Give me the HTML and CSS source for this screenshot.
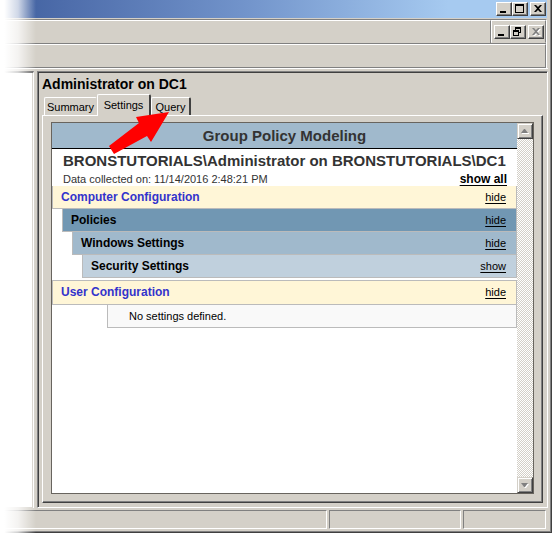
FILE: index.html
```html
<!DOCTYPE html>
<html lang="en">
<head>
<meta charset="utf-8">
<title>Group Policy Modeling</title>
<link rel="stylesheet" href="styles.css">
</head>
<body>
<div class="window">
  <header class="titlebar">
    <div class="controls">
      <button class="control" aria-label="Minimize"><svg viewBox="0 0 12 10"><path d="M2 7h6v2H2z"/></svg></button>
      <button class="control" aria-label="Maximize"><svg viewBox="0 0 12 10"><path fill-rule="evenodd" d="M1 0h9v9H1zM2 2v6h7V2z"/></svg></button>
      <button class="control control-close" aria-label="Close"><svg viewBox="0 0 12 10"><path d="M2 1h2l2 2 2-2h2L7 4.500 10 8H8L6 6 4 8H2l3-3.500z"/></svg></button>
    </div>
  </header>
  <div class="bars">
    <div class="menubar">
      <div class="menu-space"></div>
      <div class="controls child-controls">
        <button class="control" aria-label="Minimize child window"><svg viewBox="0 0 12 10"><path d="M2 7h6v2H2z"/></svg></button>
        <button class="control" aria-label="Restore child window"><svg viewBox="0 0 12 10"><path fill-rule="evenodd" d="M3 0h6v6H7v3H1V3h2zM4 2v1h3v2h1V2zM2 5v3h4V5z"/></svg></button>
        <button class="control control-close" aria-label="Close child window" disabled><svg viewBox="0 0 12 10"><path class="shine" d="M3 2h2l2 2 2-2h2L8 5.500 11 9H9L7 7 5 9H3l3-3.500z"/><path class="dim" d="M2 1h2l2 2 2-2h2L7 4.500 10 8H8L6 6 4 8H2l3-3.500z"/></svg></button>
      </div>
    </div>
    <div class="toolbar"></div>
  </div>
  <div class="workspace">
    <aside class="tree"></aside>
    <main class="details">
      <h1>Administrator on DC1</h1>
      <div class="tabs" role="tablist">
        <button class="tab" role="tab">Summary</button>
        <button class="tab active" role="tab" aria-selected="true">Settings</button>
        <button class="tab query" role="tab">Query</button>
        <svg class="arrow" viewBox="0 0 60 44" aria-hidden="true"><path d="M60 1 27 6l3 6L0 35l5 8 33-18 4 6z"/></svg>
      </div>
      <section class="tab-page">
        <div class="browser">
          <div class="report">
            <h2>Group Policy Modeling</h2>
            <div class="summary">
              <h3>BRONSTUTORIALS\Administrator on BRONSTUTORIALS\DC1</h3>
              <div class="collected"><span>Data collected on: 11/14/2016 2:48:21 PM</span><a href="#all">show all</a></div>
            </div>
            <div class="row root"><span>Computer Configuration</span><a href="#computer">hide</a></div>
            <div class="row policies"><span>Policies</span><a href="#policies">hide</a></div>
            <div class="row windows"><span>Windows Settings</span><a href="#windows">hide</a></div>
            <div class="row security"><span>Security Settings</span><a href="#security">show</a></div>
            <div class="row root user"><span>User Configuration</span><a href="#user">hide</a></div>
            <div class="row empty"><span>No settings defined.</span></div>
          </div>
          <div class="scrollbar">
            <button class="scroll" aria-label="Scroll up"><svg viewBox="0 0 8 4"><path class="shine" d="M1 4h7v1H1z"/><path class="dim" d="M0 4 3 0h1l3 4z"/></svg></button>
            <button class="scroll" aria-label="Scroll down"><svg viewBox="0 0 8 4"><path class="shine" d="M1 1h7L5 5H4z"/><path class="dim" d="M0 0h7L4 4H3z"/></svg></button>
          </div>
        </div>
      </section>
    </main>
  </div>
  <footer class="status"><div></div><div></div><div></div></footer>
  <div class="fade"></div>
</div>
</body>
</html>
```
FILE: styles.css
```css
* { box-sizing: border-box; }
body {
  margin: 0;
  font: 12px/14px "Liberation Sans", Arial, sans-serif;
  color: #000;
}
h1, h2, h3 { margin: 0; font-weight: bold; }
button { font: inherit; padding: 0; border: 0; border-radius: 0; color: #000; background: #d4d0c8; }
svg { display: block; overflow: visible; }
.shine { fill: #fff; }
.dim { fill: #808080; }

.window {
  position: relative;
  display: flex;
  flex-direction: column;
  height: 100vh;
  background: #d4d0c8;
  border-right: 1px solid #404040;
  border-bottom: 1px solid #404040;
  box-shadow: inset -1px -1px #808080;
  padding: 0 3px 3px 0;
}
.titlebar {
  height: 18px;
  flex: none;
  display: flex;
  justify-content: flex-end;
  margin-right: 1px;
  padding: 2px 1px 0 0;
  background: linear-gradient(90deg, #3f5f9e 0, #4e6dab 12%, #7294cb 45%, #a6caf0 82%, #a6caf0);
}
.controls { display: flex; }
.control {
  display: flex;
  width: 16px;
  height: 14px;
  padding: 1px;
  border: 1px solid;
  border-color: #fff #404040 #404040 #fff;
  box-shadow: inset -1px -1px #808080;
}
.control svg { flex: none; width: 12px; height: 10px; }
.control-close { margin-left: 2px; }
.bars {
  flex: none;
  margin: 1px 1px 0 0;
  border-top: 1px solid #808080;
  border-right: 1px solid #fff;
}
.menubar { display: flex; height: 24px; border-bottom: 1px solid #808080; }
.menu-space { flex: 1; border-top: 1px solid #fff; border-right: 1px solid #808080; }
.child-controls { border: 1px solid; border-color: #fff #808080 #d4d0c8 #fff; padding: 4px 1px 0 2px; }
.toolbar { height: 24px; border: 1px solid; border-color: #fff #808080 #808080 #d4d0c8; }
.workspace {
  flex: 1;
  min-height: 0;
  display: flex;
  border-top: 1px solid #fff;
  padding-top: 2px;
}
.tree {
  width: 34px;
  flex: none;
  background: #fff;
  border-top: 2px solid #606060;
  border-right: 1px solid #fff;
  box-shadow: inset -1px -1px #d4d0c8;
}
.details {
  flex: 1;
  min-width: 0;
  display: flex;
  flex-direction: column;
  margin-left: 3px;
  border: 1px solid;
  border-color: #808080 #fff #fff #808080;
  box-shadow: inset 1px 1px #404040;
  padding: 4px;
}
h1 { font-size: 14px; line-height: 16px; }
.tabs { position: relative; display: flex; align-items: flex-end; height: 23px; padding-left: 2px; font-size: 11px; }
.tab {
  width: 53px;
  height: 18px;
  border: 1px solid;
  border-color: #fff #d4d0c8 #d4d0c8 #fff;
  border-bottom: 0;
  border-radius: 2px 2px 0 0;
}
.tab.active { width: 54px; height: 22px; margin-bottom: -1px; padding-bottom: 2px; border-right: 2px solid #404040; z-index: 1; }
.tab.query { width: 40px; border-right: 2px solid #404040; }
.arrow { position: absolute; left: 67px; top: 19px; width: 60px; height: 44px; fill: #f00; z-index: 2; }
.tab-page {
  flex: 1;
  min-height: 0;
  display: flex;
  border: 1px solid;
  border-color: #fff #404040 #404040 #fff;
  box-shadow: inset -1px -1px #808080;
  padding: 6px 8px 8px;
}
.browser { flex: 1; min-width: 0; display: flex; border: 1px solid #68645e; background: #fff; }
.report { flex: 1; min-width: 0; }
.report a { color: #000; text-decoration: underline; text-underline-offset: 2px; }
h2 {
  height: 26px;
  line-height: 25px;
  font-size: 15px;
  text-align: center;
  color: #333;
  background: #a0b9cc;
  border-bottom: 1px solid #000;
}
.summary { height: 37px; padding: 3px 10px 0 11px; }
h3 { font-size: 15px; line-height: 18px; color: #333; white-space: nowrap; }
.collected { display: flex; justify-content: space-between; font-size: 11px; line-height: 18px; color: #333; }
.collected a { font-size: 12px; font-weight: bold; }
.row {
  display: flex;
  justify-content: space-between;
  height: 23px;
  line-height: 22px;
  padding: 0 10px 0 8px;
  border: 1px solid #bbb;
  border-top: 0;
  font-weight: bold;
}
.row a { font-size: 11px; font-weight: normal; }
.root { background: #fff6d7; color: #3333cc; }
.policies { margin-left: 10px; background: #7197b3; }
.windows { margin-left: 20px; background: #a0b9cc; }
.security { margin-left: 30px; background: #c0d0dd; }
.user { height: 25px; margin-top: 2px; border-top: 1px solid #bbb; line-height: 23px; }
.empty { margin-left: 55px; padding-left: 21px; font-size: 11px; font-weight: normal; background: #f9f9f9; }
.scrollbar {
  width: 16px;
  flex: none;
  display: flex;
  flex-direction: column;
  justify-content: space-between;
  background: repeating-conic-gradient(#d4d0c8 0 25%, #fff 0 50%) 0 0 / 2px 2px;
}
.scroll {
  display: grid;
  place-items: center;
  height: 16px;
  background: #d4d0c8;
  border: 1px solid;
  border-color: #d4d0c8 #404040 #404040 #d4d0c8;
  box-shadow: inset 1px 1px #fff, inset -1px -1px #808080;
}
.scroll svg { width: 8px; height: 4px; }
.status { flex: none; display: flex; gap: 2px; height: 21px; margin-right: 2px; padding-top: 2px; }
.status div { border: 1px solid; border-color: #808080 #fff #fff #808080; width: 83px; }
.status div:first-child { flex: 1; border-left: 0; }
.status div:nth-child(2) { width: 132px; }
.fade {
  position: absolute;
  inset: 0 auto -1px 0;
  width: 36px;
  background: linear-gradient(90deg, #fff 0, #fff 12%, rgba(255,255,255,.75) 50%, rgba(255,255,255,0));
  pointer-events: none;
}
```
